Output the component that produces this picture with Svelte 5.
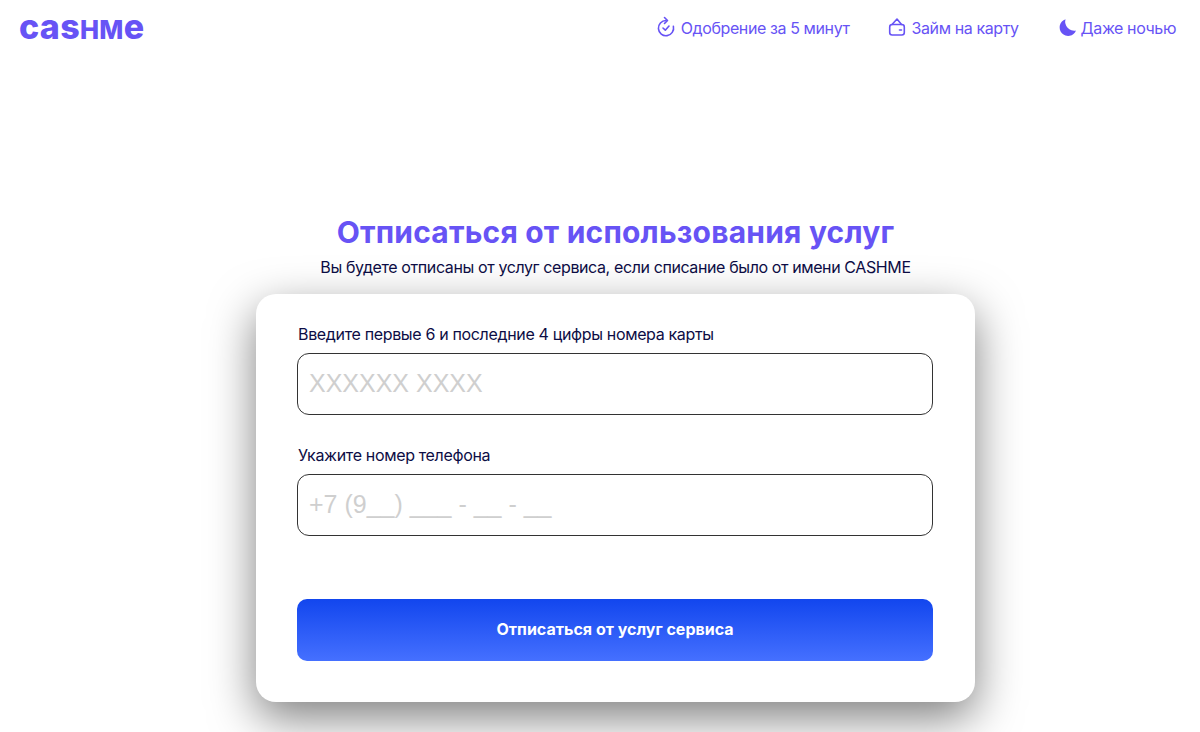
<script>
  const perks = [
    { id: 'clock', text: 'Одобрение за 5 минут' },
    { id: 'wallet', text: 'Займ на карту' },
    { id: 'moon', text: 'Даже ночью' }
  ];
</script>

<header class="top">
  <div class="logo">cas<span>HM</span>e</div>
  <ul class="perks">
    {#each perks as perk}
      <li>
        <svg width="20" height="20" viewBox="0 0 20 20" fill="none" stroke="currentColor" stroke-width="1.6" stroke-linecap="round" stroke-linejoin="round">
          {#if perk.id === 'clock'}
            <path d="M18.4 10.4A7.6 7.6 0 1 1 11 4.5" />
            <path d="M9.5 1.5l3 3-3 3" />
            <path d="M8 12l2.3 2.2L14 10" />
          {:else if perk.id === 'wallet'}
            <rect x="3.7" y="8.5" width="14.6" height="10.5" rx="2.5" />
            <path d="M6 8.5 11 3l4.5 5.5" />
            <path d="M13.5 14h2" />
          {:else}
            <path d="M10.5 3.3A8.5 8.5 0 1 0 21 14.5 9 9 0 0 1 10.5 3.3z" fill="currentColor" stroke="none" />
          {/if}
        </svg>
        <span>{perk.text}</span>
      </li>
    {/each}
  </ul>
</header>

<main class="page">
  <h1>Отписаться от использования услуг</h1>
  <p class="sub">Вы будете отписаны от услуг сервиса, если списание было от имени CASHME</p>

  <form class="card">
    <label class="field">
      <span>Введите первые 6 и последние 4 цифры номера карты</span>
      <input type="text" placeholder="XXXXXX XXXX" />
    </label>
    <label class="field second">
      <span>Укажите номер телефона</span>
      <input type="text" placeholder="+7 (9__) ___ - __ - __" />
    </label>
    <button type="button">Отписаться от услуг сервиса</button>
  </form>
</main>

<style>
  :global(body) {
    margin: 0;
    background: #fff;
    font-family: Inter, "Noto Sans", sans-serif;
  }

  .top {
    display: flex;
    justify-content: space-between;
    align-items: flex-start;
    padding: 7px 24px 0 19px;
    height: 55px;
    box-sizing: border-box;
  }

  .logo {
    color: #6753f5;
    font-weight: 800;
    font-size: 34px;
    line-height: 40px;
    letter-spacing: 0.3px;
  }

  .logo span {
    font-size: 25.5px;
  }

  .perks {
    display: flex;
    gap: 36px;
    list-style: none;
    margin: 0;
    padding: 11px 0 0;
    color: #6753f5;
    font-size: 16px;
    line-height: 20px;
    letter-spacing: -0.4px;
  }

  .perks li {
    display: flex;
    align-items: flex-start;
    gap: 6px;
  }

  .perks svg {
    margin-top: -2px;
    overflow: visible;
  }

  .page {
    display: flex;
    flex-direction: column;
    align-items: center;
    padding: 0 0 30px 31px;
  }

  h1 {
    margin: 157px 0 0;
    color: #6753f5;
    font-size: 30px;
    line-height: 40px;
    font-weight: 700;
    letter-spacing: 0.2px;
  }

  .sub {
    margin: 4px 0 0;
    color: #0d0d45;
    font-size: 16px;
    line-height: 22px;
    letter-spacing: -0.39px;
  }

  .card {
    box-sizing: border-box;
    width: 719px;
    height: 408px;
    margin-top: 16px;
    padding: 29px 42px 41px 41px;
    border-radius: 20px;
    background: #fff;
    box-shadow: 0 16px 46px rgba(0, 0, 0, 0.5);
    display: flex;
    flex-direction: column;
  }

  .field {
    display: flex;
    flex-direction: column;
    color: #0d0d45;
    font-size: 16px;
    line-height: 22px;
    letter-spacing: -0.34px;
  }

  .field span {
    margin-bottom: 8px;
    padding-left: 1px;
  }

  .second {
    margin-top: 29px;
  }

  .field input {
    box-sizing: border-box;
    height: 62px;
    padding: 0 11px 2px;
    border: 1px solid #333;
    border-radius: 12px;
    outline: none;
    font-family: "Liberation Sans", Arial, sans-serif;
    font-size: 25px;
  }

  .field input::placeholder {
    color: #cfcfcf;
    opacity: 1;
  }

  button {
    height: 62px;
    margin-top: 63px;
    padding-bottom: 3px;
    border: 0;
    border-radius: 10px;
    background: linear-gradient(180deg, #1246ee, #4570ff);
    color: #fff;
    font-family: Inter, sans-serif;
    font-size: 16px;
    font-weight: 700;
  }
</style>
